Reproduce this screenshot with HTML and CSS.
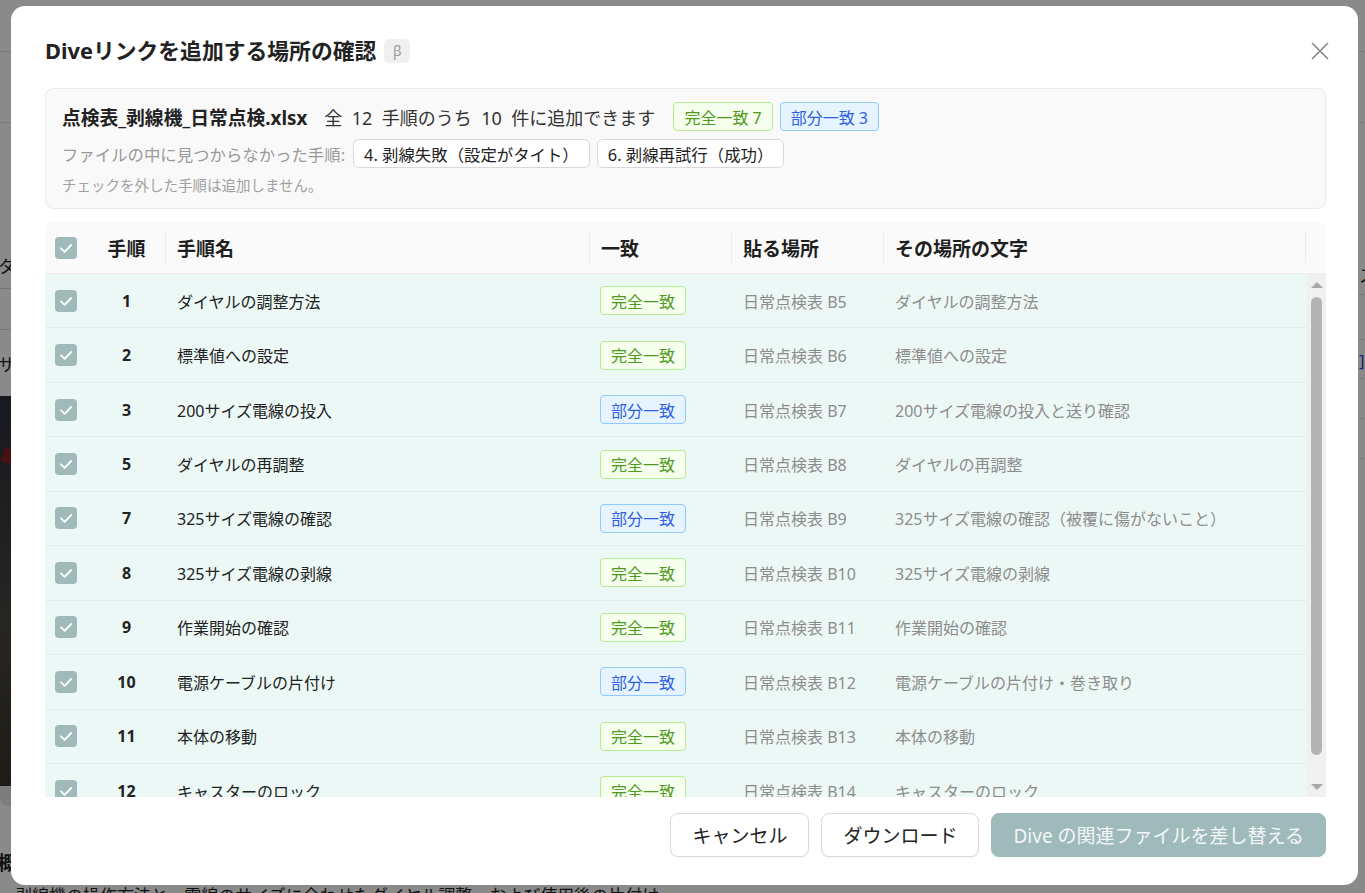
FILE: index.html
```html
<!DOCTYPE html>
<html lang="ja">
<head>
<meta charset="utf-8">
<title>Diveリンクを追加する場所の確認</title>
<link rel="stylesheet" href="styles.css">
</head>
<body>
<div class="page">
  <div class="pg-top"></div>
  <div class="pg-sub"></div>
  <div class="pg-main">
    <div class="pg-left">
      <div class="pg-label">タイトル</div>
      <div class="pg-input">剥線機の操作手順</div>
      <div class="pg-label">サムネイル</div>
      <div class="pg-photo"><div class="pg-stripe"></div></div>
      <div class="pg-bar"></div>
      <div class="pg-h">概要</div>
      <p class="pg-p">剥線機の操作方法と、電線のサイズに合わせたダイヤル調整、および使用後の片付け</p>
    </div>
    <div class="pg-right">
      <div class="pg-prop"><span></span><span>ステータス</span></div>
      <div class="pg-prop pg-prop2"><span></span><span class="pg-link">]公開</span></div>
      <div class="pg-prop"><span></span><span></span></div>
      <div class="pg-prop"><span></span><span></span></div>
      <div class="pg-files"><span class="pg-w">[W]</span><span class="pg-link">作業標準書_剥線機操作.docx</span></div>
    </div>
  </div>
</div>

<div class="overlay">
  <div class="modal">
    <div class="m-head">
      <div class="m-title">Diveリンクを追加する場所の確認<span class="beta">β</span></div>
      <svg class="close" width="18" height="18" viewBox="0 0 18 18"><path d="M1.5 1.5 L16.5 16.5 M16.5 1.5 L1.5 16.5" stroke="#8a8a8a" stroke-width="1.7" fill="none" stroke-linecap="round"/></svg>
    </div>

    <div class="summary">
      <div class="s-line1">
        <span class="s-file">点検表_剥線機_日常点検.xlsx</span>
        <span class="s-count">全 12 手順のうち 10 件に追加できます</span>
        <span class="tag tag-green">完全一致 7</span>
        <span class="tag tag-blue">部分一致 3</span>
      </div>
      <div class="s-line2">
        <span class="s-label">ファイルの中に見つからなかった手順:</span>
        <span class="chip">4. 剥線失敗（設定がタイト）</span>
        <span class="chip">6. 剥線再試行（成功）</span>
      </div>
      <div class="s-note">チェックを外した手順は追加しません。</div>
    </div>

    <div class="tbl">
      <div class="thead">
        <div class="th th-check"><span class="cb"><svg width="22" height="22" viewBox="0 0 22 22"><path d="M6 11.3 L9.6 14.8 L16.2 8" stroke="#fff" stroke-width="1.8" fill="none" stroke-linecap="round" stroke-linejoin="round"/></svg></span></div>
        <div class="th th-num">手順</div>
        <div class="th sep">手順名</div>
        <div class="th sep">一致</div>
        <div class="th sep">貼る場所</div>
        <div class="th sep">その場所の文字</div>
        <div class="th sep"></div>
      </div>
      <div class="tbody">
        <div class="rows">
          <div class="row"><div class="td td-check"><span class="cb"><svg width="22" height="22" viewBox="0 0 22 22"><path d="M6 11.3 L9.6 14.8 L16.2 8" stroke="#fff" stroke-width="1.8" fill="none" stroke-linecap="round" stroke-linejoin="round"/></svg></span></div><div class="td td-num">1</div><div class="td td-name">ダイヤルの調整方法</div><div class="td"><span class="tag tag-green">完全一致</span></div><div class="td td-muted">日常点検表 B5</div><div class="td td-muted">ダイヤルの調整方法</div></div>
          <div class="row"><div class="td td-check"><span class="cb"><svg width="22" height="22" viewBox="0 0 22 22"><path d="M6 11.3 L9.6 14.8 L16.2 8" stroke="#fff" stroke-width="1.8" fill="none" stroke-linecap="round" stroke-linejoin="round"/></svg></span></div><div class="td td-num">2</div><div class="td td-name">標準値への設定</div><div class="td"><span class="tag tag-green">完全一致</span></div><div class="td td-muted">日常点検表 B6</div><div class="td td-muted">標準値への設定</div></div>
          <div class="row"><div class="td td-check"><span class="cb"><svg width="22" height="22" viewBox="0 0 22 22"><path d="M6 11.3 L9.6 14.8 L16.2 8" stroke="#fff" stroke-width="1.8" fill="none" stroke-linecap="round" stroke-linejoin="round"/></svg></span></div><div class="td td-num">3</div><div class="td td-name">200サイズ電線の投入</div><div class="td"><span class="tag tag-blue">部分一致</span></div><div class="td td-muted">日常点検表 B7</div><div class="td td-muted">200サイズ電線の投入と送り確認</div></div>
          <div class="row"><div class="td td-check"><span class="cb"><svg width="22" height="22" viewBox="0 0 22 22"><path d="M6 11.3 L9.6 14.8 L16.2 8" stroke="#fff" stroke-width="1.8" fill="none" stroke-linecap="round" stroke-linejoin="round"/></svg></span></div><div class="td td-num">5</div><div class="td td-name">ダイヤルの再調整</div><div class="td"><span class="tag tag-green">完全一致</span></div><div class="td td-muted">日常点検表 B8</div><div class="td td-muted">ダイヤルの再調整</div></div>
          <div class="row"><div class="td td-check"><span class="cb"><svg width="22" height="22" viewBox="0 0 22 22"><path d="M6 11.3 L9.6 14.8 L16.2 8" stroke="#fff" stroke-width="1.8" fill="none" stroke-linecap="round" stroke-linejoin="round"/></svg></span></div><div class="td td-num">7</div><div class="td td-name">325サイズ電線の確認</div><div class="td"><span class="tag tag-blue">部分一致</span></div><div class="td td-muted">日常点検表 B9</div><div class="td td-muted">325サイズ電線の確認（被覆に傷がないこと）</div></div>
          <div class="row"><div class="td td-check"><span class="cb"><svg width="22" height="22" viewBox="0 0 22 22"><path d="M6 11.3 L9.6 14.8 L16.2 8" stroke="#fff" stroke-width="1.8" fill="none" stroke-linecap="round" stroke-linejoin="round"/></svg></span></div><div class="td td-num">8</div><div class="td td-name">325サイズ電線の剥線</div><div class="td"><span class="tag tag-green">完全一致</span></div><div class="td td-muted">日常点検表 B10</div><div class="td td-muted">325サイズ電線の剥線</div></div>
          <div class="row"><div class="td td-check"><span class="cb"><svg width="22" height="22" viewBox="0 0 22 22"><path d="M6 11.3 L9.6 14.8 L16.2 8" stroke="#fff" stroke-width="1.8" fill="none" stroke-linecap="round" stroke-linejoin="round"/></svg></span></div><div class="td td-num">9</div><div class="td td-name">作業開始の確認</div><div class="td"><span class="tag tag-green">完全一致</span></div><div class="td td-muted">日常点検表 B11</div><div class="td td-muted">作業開始の確認</div></div>
          <div class="row"><div class="td td-check"><span class="cb"><svg width="22" height="22" viewBox="0 0 22 22"><path d="M6 11.3 L9.6 14.8 L16.2 8" stroke="#fff" stroke-width="1.8" fill="none" stroke-linecap="round" stroke-linejoin="round"/></svg></span></div><div class="td td-num">10</div><div class="td td-name">電源ケーブルの片付け</div><div class="td"><span class="tag tag-blue">部分一致</span></div><div class="td td-muted">日常点検表 B12</div><div class="td td-muted">電源ケーブルの片付け・巻き取り</div></div>
          <div class="row"><div class="td td-check"><span class="cb"><svg width="22" height="22" viewBox="0 0 22 22"><path d="M6 11.3 L9.6 14.8 L16.2 8" stroke="#fff" stroke-width="1.8" fill="none" stroke-linecap="round" stroke-linejoin="round"/></svg></span></div><div class="td td-num">11</div><div class="td td-name">本体の移動</div><div class="td"><span class="tag tag-green">完全一致</span></div><div class="td td-muted">日常点検表 B13</div><div class="td td-muted">本体の移動</div></div>
          <div class="row"><div class="td td-check"><span class="cb"><svg width="22" height="22" viewBox="0 0 22 22"><path d="M6 11.3 L9.6 14.8 L16.2 8" stroke="#fff" stroke-width="1.8" fill="none" stroke-linecap="round" stroke-linejoin="round"/></svg></span></div><div class="td td-num">12</div><div class="td td-name">キャスターのロック</div><div class="td"><span class="tag tag-green">完全一致</span></div><div class="td td-muted">日常点検表 B14</div><div class="td td-muted">キャスターのロック</div></div>
        </div>
        <div class="sb">
          <div class="sb-btn"><span class="tri tri-up"></span></div>
          <div class="sb-track"><div class="sb-thumb"></div></div>
          <div class="sb-btn"><span class="tri tri-down"></span></div>
        </div>
      </div>
    </div>

    <div class="m-foot">
      <button class="btn">キャンセル</button>
      <button class="btn">ダウンロード</button>
      <button class="btn btn-primary">Dive の関連ファイルを差し替える</button>
    </div>
  </div>
</div>
</body>
</html>
```

FILE: styles.css
```css
* { box-sizing: border-box; margin: 0; padding: 0; }
html, body { width: 1365px; height: 893px; }
body {
  font-family: "Noto Sans", "Noto Sans CJK JP", sans-serif;
  color: #222;
  background: #fff;
  overflow: hidden;
}

/* ---------- background page ---------- */
.page { width: 1365px; height: 893px; display: flex; flex-direction: column; overflow: hidden; }
.pg-top { height: 52px; border-bottom: 1px solid #e4e4e4; }
.pg-sub { height: 71px; border-bottom: 1px solid #e4e4e4; }
.pg-main { display: grid; grid-template-columns: 715px 650px; flex: 1; overflow: hidden; }
.pg-left { padding: 133px 0 0 0; display: flex; flex-direction: column; }
.pg-label { font-size: 17px; line-height: 22px; color: #222; margin-left: -2px; }
.pg-input { height: 42px; margin: 10px 0 24px -10px; border: 1px solid #d9d9d9; border-radius: 8px; padding: 0 30px; line-height: 40px; font-size: 16px; }
.pg-photo { height: 390px; margin-top: 20px; background: linear-gradient(160deg, #2a2f3a 0%, #4a4640 35%, #3a342c 60%, #5a5248 100%); overflow: hidden; }
.pg-stripe { height: 14px; margin-top: 70px; background: #8a2020; transform: rotate(18deg); width: 120px; }
.pg-bar { height: 20px; background: #e8e8e8; border-radius: 0 0 8px 8px; }
.pg-h { font-size: 19px; font-weight: 700; margin-top: 42px; margin-left: -2px; }
.pg-p { font-size: 17px; margin-top: 6px; padding-left: 15px; white-space: nowrap; }
.pg-right { padding: 132px 0 0 0; display: flex; flex-direction: column; overflow: hidden; }
.pg-prop { display: grid; grid-template-columns: 644px 6px; height: 40px; border-bottom: 1px solid #e4e4e4; font-size: 17px; align-items: center; }
.pg-prop2 { margin-top: 44px; border-top: 1px solid #e4e4e4; }
.pg-prop span:last-child { white-space: nowrap; }
.pg-link { color: #1f4fd1; }
.pg-files { margin-top: auto; margin-bottom: -10px; display: flex; gap: 20px; padding-left: 50px; font-size: 17px; white-space: nowrap; }
.pg-w { color: #1f4fd1; font-size: 12px; }

/* ---------- overlay & modal ---------- */
.overlay {
  position: fixed; inset: 0;
  background: rgba(0, 0, 0, 0.46);
  padding: 6px 7px 0 11px;
}
.modal {
  width: 1347px;
  background: #fff;
  border-radius: 14px;
  padding: 31px 32px 28px 34px;
  display: flex; flex-direction: column;
}
.m-head { display: flex; align-items: center; justify-content: space-between; height: 28px; }
.m-title { display: flex; align-items: center; gap: 8px; font-size: 21.8px; font-weight: 700; color: #222; line-height: 28px; }
.beta { display: inline-flex; align-items: center; justify-content: center; width: 26px; height: 24px; border-radius: 5px; background: #f0f0f0; color: #9a9a9a; font-size: 14px; font-weight: 400; }
.close { margin-right: -3px; }

/* summary */
.summary {
  margin-top: 23px;
  height: 121px;
  background: #f9f9f9;
  border: 1px solid #ebebeb;
  border-radius: 8px;
  padding: 13px 16px;
}
.s-line1 { display: flex; align-items: center; height: 29px; }
.s-file { font-size: 18.8px; font-weight: 700; color: #222; }
.s-count { font-size: 18px; color: #333; margin-left: 17px; word-spacing: 4.8px; }
.s-line1 .tag-green { margin-left: 18px; }
.s-line1 .tag-blue { margin-left: 7px; }
.s-line2 { display: flex; align-items: center; gap: 7px; margin-top: 8px; height: 29px; }
.s-label { font-size: 16.4px; color: #9a9a9a; margin-right: 1px; }
.chip { display: inline-flex; align-items: center; height: 29px; padding: 0 10px; border: 1px solid #d9d9d9; border-radius: 6px; background: #fff; font-size: 16.4px; color: #222; }
.s-note { margin-top: 7px; font-size: 14.5px; line-height: 20px; color: #a0a0a0; }

.tag { display: inline-flex; align-items: center; height: 29px; padding: 0 10px; border: 1px solid; border-radius: 4px; font-size: 16px; white-space: nowrap; }
.tag-green { background: #f6ffed; border-color: #b7eb8f; color: #4f9a1e; }
.tag-blue { background: #e6f4ff; border-color: #91caff; color: #2f5fe0; }

/* table */
.tbl { margin-top: 13px; border-radius: 8px 8px 0 0; overflow: hidden; }
.thead {
  display: grid;
  grid-template-columns: 43px 77px 424px 142px 152px 422px 21px;
  height: 52px;
  background: #fafafa;
  border-bottom: 1px solid #eeeeee;
}
.th { position: relative; display: flex; align-items: center; padding-left: 12px; font-size: 19px; font-weight: 700; color: #1f1f1f; }
.th.sep::before { content: ""; position: absolute; left: 0; top: 9px; bottom: 10px; width: 1px; background: #ececec; }
.td { display: flex; align-items: center; padding-left: 12px; font-size: 16px; white-space: nowrap; }
.th.th-check, .td.td-check { padding-left: 10px; }
.th.th-num, .td.td-num { justify-content: center; padding-left: 0; }
.cb { display: inline-flex; width: 22px; height: 22px; border-radius: 4px; background: #a0b9b9; }

.tbody { display: flex; height: 523px; background: #ecf8f6; }
.rows { flex: 1; overflow: hidden; }
.row {
  display: grid;
  grid-template-columns: 43px 77px 424px 142px 152px 1fr;
  height: 54.44px;
  border-bottom: 1px solid #e3edeb;
}
.td-num { font-weight: 700; color: #222; }
.td-name { color: #222; }
.td-muted { color: #8c8c8c; }
.row .tag { margin-left: -1px; }

/* scrollbar */
.sb { width: 19px; background: #f0f0f0; display: flex; flex-direction: column; }
.sb-btn { height: 19px; display: flex; align-items: center; justify-content: center; }
.tri { width: 0; height: 0; border-left: 6px solid transparent; border-right: 6px solid transparent; }
.tri-up { border-bottom: 6px solid #a9a9a9; margin-top: 2px; }
.tri-down { border-top: 6px solid #a9a9a9; margin-bottom: 2px; }
.sb-track { flex: 1; padding: 4px 4px 0; }
.sb-thumb { height: 458px; border-radius: 6px; background: #b3b3b3; }

/* footer */
.m-foot { margin-top: 16px; display: flex; justify-content: flex-end; gap: 12px; }
.btn {
  height: 44px;
  padding: 0 21px;
  border: 1px solid #d9d9d9;
  border-radius: 8px;
  background: #fff;
  font-family: inherit;
  font-size: 19px;
  color: #222;
  box-shadow: 0 2px 0 rgba(0, 0, 0, 0.02);
}
.btn-primary { background: #9fbaba; border-color: #9fbaba; color: #f3f7f7; }
```
